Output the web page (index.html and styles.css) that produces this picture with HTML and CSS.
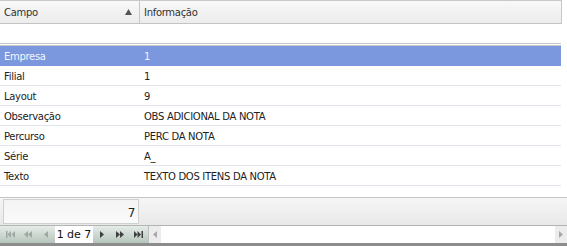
FILE: index.html
```html
<!DOCTYPE html>
<html lang="pt">
<head>
    <meta charset="UTF-8">
    <title>Propriedades</title>
    <link rel="stylesheet" href="styles.css">
</head>
<body>
    <div class="grid">
        <div class="grid-head">
            <div class="hcell campo">Campo <svg class="sort" width="7" height="6" viewBox="0 0 7 6"><path d="M3.5 0L7 6 0 6z"/></svg></div>
            <div class="hcell info">Informação</div>
        </div>
        <div class="blank"></div>
        <div class="rows">
            <div class="row selected"><div class="cell campo">Empresa</div><div class="cell">1</div></div>
            <div class="row"><div class="cell campo">Filial</div><div class="cell">1</div></div>
            <div class="row"><div class="cell campo">Layout</div><div class="cell">9</div></div>
            <div class="row"><div class="cell campo">Observação</div><div class="cell">OBS ADICIONAL DA NOTA</div></div>
            <div class="row"><div class="cell campo">Percurso</div><div class="cell">PERC DA NOTA</div></div>
            <div class="row"><div class="cell campo">Série</div><div class="cell">A_</div></div>
            <div class="row"><div class="cell campo">Texto</div><div class="cell">TEXTO DOS ITENS DA NOTA</div></div>
        </div>
        <div class="spacer"></div>
        <div class="summary">
            <div class="sum-cell">7</div>
        </div>
        <div class="pager">
            <div class="nav">
                <span class="btn"><svg width="9" height="7" viewBox="0 0 9 7"><rect x="0" y="0" width="1.5" height="7"/><path d="M5 0L1.5 3.5 5 7z"/><path d="M9 0L5.5 3.5 9 7z"/></svg></span>
                <span class="btn"><svg width="8" height="7" viewBox="0 0 8 7"><path d="M4 0L0 3.5 4 7z"/><path d="M8 0L4 3.5 8 7z"/></svg></span>
                <span class="btn"><svg width="4" height="7" viewBox="0 0 4 7"><path d="M4 0L0 3.5 4 7z"/></svg></span>
                <span class="page">1 de 7</span>
                <span class="btn dark"><svg width="4" height="7" viewBox="0 0 4 7"><path d="M0 0L4 3.5 0 7z"/></svg></span>
                <span class="btn dark"><svg width="8" height="7" viewBox="0 0 8 7"><path d="M0 0L4 3.5 0 7z"/><path d="M4 0L8 3.5 4 7z"/></svg></span>
                <span class="btn dark"><svg width="9" height="7" viewBox="0 0 9 7"><path d="M0 0L3.5 3.5 0 7z"/><path d="M3.5 0L7 3.5 3.5 7z"/><rect x="7.5" y="0" width="1.5" height="7"/></svg></span>
            </div>
            <div class="hscroll">
                <span class="arrow"><svg width="4" height="7" viewBox="0 0 4 7"><path d="M4 0L0 3.5 4 7z"/></svg></span>
                <span class="track"></span>
                <span class="arrow"><svg width="4" height="7" viewBox="0 0 4 7"><path d="M0 0L4 3.5 0 7z"/></svg></span>
            </div>
        </div>
    </div>
</body>
</html>
```

FILE: styles.css
```css
body {
    margin: 0;
    background: #ffffff;
    font-family: "DejaVu Sans", Tahoma, sans-serif;
    font-size: 10px;
    letter-spacing: -0.3px;
    color: #222;
}
.grid {
    width: 567px;
    height: 246px;
    display: flex;
    flex-direction: column;
    overflow: hidden;
}
.grid-head {
    display: flex;
    flex-shrink: 0;
    height: 22px;
    width: 562px;
    border-top: 1px solid #c8c8c8;
    border-bottom: 1px solid #c4c4c4;
    background: linear-gradient(#f8f8f8, #ececec);
    color: #333;
}
.hcell {
    display: flex;
    align-items: center;
    padding-left: 4px;
    border-right: 1px solid #c8c8c8;
}
.hcell.campo {
    width: 135px;
    justify-content: space-between;
}
.hcell.info {
    flex: 1;
}
.sort {
    fill: #555;
    margin-right: 7px;
    margin-bottom: 1px;
}
.blank {
    height: 19px;
    flex-shrink: 0;
}
.rows {
    width: 561px;
    flex-shrink: 0;
    border-top: 3px double #c8c8c8;
}
.row {
    display: flex;
    align-items: center;
    height: 20px;
    padding-top: 1px;
    box-sizing: border-box;
    border-bottom: 1px solid #e0e4ec;
}
.row.selected {
    background: #7b97dd;
    color: #f4f6ff;
    border-bottom-color: #7b97dd;
}
.cell {
    padding-left: 4px;
}
.cell.campo {
    width: 136px;
}
.spacer {
    height: 11px;
    flex-shrink: 0;
}
.summary {
    height: 27px;
    flex-shrink: 0;
    border-top: 1px solid #c4c4c4;
    border-bottom: 1px solid #b4b4b4;
    background: linear-gradient(#f6f6f6, #e8e8e8);
    display: flex;
}
.sum-cell {
    width: 131px;
    margin: 1px 0 1px 3px;
    border: 1px solid #d0d0d0;
    background: linear-gradient(#f4f4f4, #fafafa);
    padding-right: 3px;
    padding-bottom: 3px;
    display: flex;
    align-items: flex-end;
    justify-content: flex-end;
    font-size: 12px;
}
.pager {
    display: flex;
    flex-shrink: 0;
    height: 17px;
    border-bottom: 3px solid #8c8c8c;
}
.nav {
    display: flex;
    align-items: center;
    width: 147px;
    padding-left: 1px;
    background: linear-gradient(#e6ece8, #b6c6bc);
    border-right: 1px solid #c0c0c0;
}
.btn {
    display: flex;
    justify-content: center;
    width: 18px;
    flex-shrink: 0;
    fill: #a0a8a4;
}
.btn.dark {
    fill: #404040;
}
.page {
    flex-shrink: 0;
    width: 38px;
    text-align: center;
    background: #ffffff;
    height: 17px;
    line-height: 17px;
    font-size: 11px;
    letter-spacing: 0;
    color: #111;
    white-space: nowrap;
}
.hscroll {
    flex: 1;
    display: flex;
}
.arrow {
    width: 12px;
    display: flex;
    align-items: center;
    justify-content: center;
    background: #ececec;
    fill: #a8a8a8;
}
.track {
    flex: 1;
    background: #ffffff;
}
```
